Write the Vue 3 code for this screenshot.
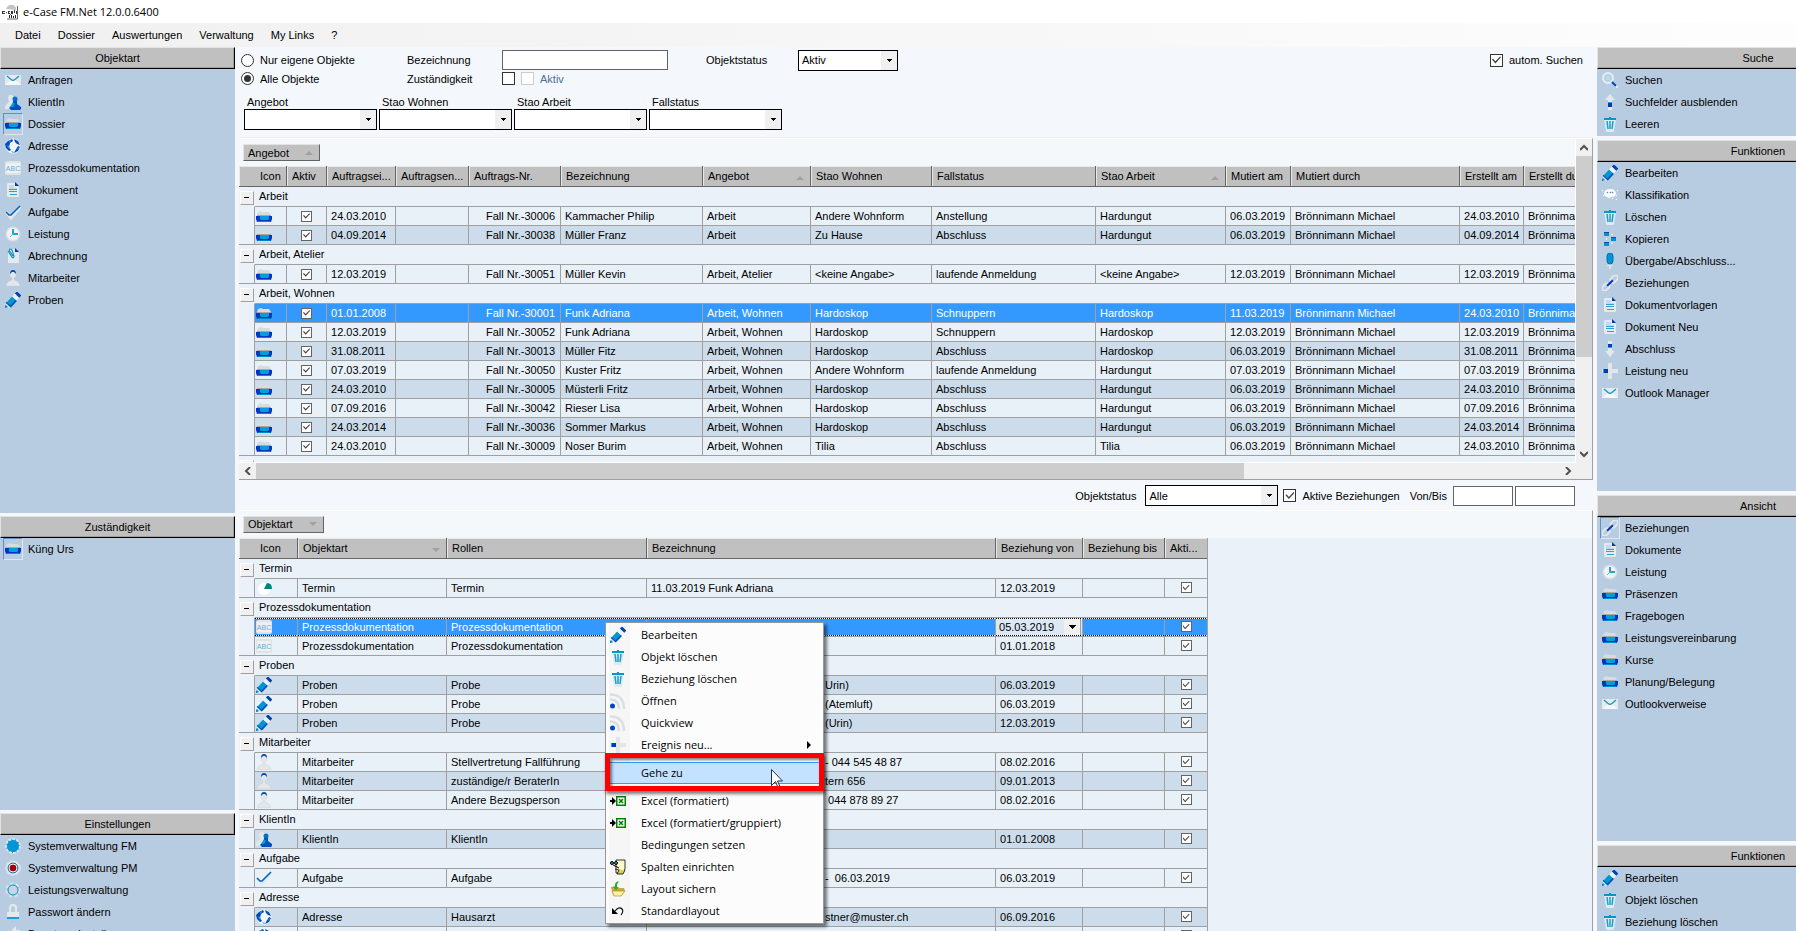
<script setup>
import { ref } from 'vue'

const menus = ['Datei', 'Dossier', 'Auswertungen', 'Verwaltung', 'My Links', '?']

const leftPanels = [
  {
    title: 'Objektart',
    size: 466,
    items: [
      ['mail', 'Anfragen'],
      ['client', 'KlientIn'],
      ['box', 'Dossier', true],
      ['globe', 'Adresse'],
      ['abc', 'Prozessdokumentation'],
      ['doc', 'Dokument'],
      ['check', 'Aufgabe'],
      ['clock', 'Leistung'],
      ['clip', 'Abrechnung'],
      ['person', 'Mitarbeiter'],
      ['pencil', 'Proben'],
    ],
  },
  { title: 'Zuständigkeit', size: 294, items: [['box', 'Küng Urs', true]] },
  {
    title: 'Einstellungen',
    size: 118,
    items: [
      ['gear-blue', 'Systemverwaltung FM'],
      ['gear-red', 'Systemverwaltung PM'],
      ['gear', 'Leistungsverwaltung'],
      ['lock', 'Passwort ändern'],
      ['tool', 'Benutzereinstellungen'],
    ],
  },
]

const rightPanels = [
  {
    title: 'Suche',
    size: 89,
    items: [['search', 'Suchen'], ['up', 'Suchfelder ausblenden'], ['trash', 'Leeren']],
  },
  {
    title: 'Funktionen',
    size: 351,
    items: [
      ['pencil', 'Bearbeiten'],
      ['cloud', 'Klassifikation'],
      ['trash', 'Löschen'],
      ['copy', 'Kopieren'],
      ['pin', 'Übergabe/Abschluss...'],
      ['link', 'Beziehungen'],
      ['doc', 'Dokumentvorlagen'],
      ['doc', 'Dokument Neu'],
      ['down', 'Abschluss'],
      ['plus', 'Leistung neu'],
      ['mail', 'Outlook Manager'],
    ],
  },
  {
    title: 'Ansicht',
    size: 346,
    items: [
      ['link', 'Beziehungen', true],
      ['doc', 'Dokumente'],
      ['clock', 'Leistung'],
      ['box', 'Präsenzen'],
      ['box', 'Fragebogen'],
      ['box', 'Leistungsvereinbarung'],
      ['box', 'Kurse'],
      ['box', 'Planung/Belegung'],
      ['mail', 'Outlookverweise'],
    ],
  },
  {
    title: 'Funktionen',
    size: 86,
    items: [['pencil', 'Bearbeiten'], ['trash', 'Objekt löschen'], ['trash', 'Beziehung löschen']],
  },
]

const filters = ['Angebot', 'Stao Wohnen', 'Stao Arbeit', 'Fallstatus']

const caseCols = [
  ['Auftragsei...', 69],
  ['Auftragsen...', 73],
  ['Auftrags-Nr.', 92],
  ['Bezeichnung', 142],
  ['Angebot', 108, true],
  ['Stao Wohnen', 121],
  ['Fallstatus', 164],
  ['Stao Arbeit', 130, true],
  ['Mutiert am', 65],
  ['Mutiert durch', 169],
  ['Erstellt am', 64],
  ['Erstellt durch', 169],
]
const BM = 'Brönnimann Michael'
const caseRow = (n, von, nr, name, angebot, wohnen, status, arbeit, mutiert, erstellt) => ({
  n,
  cells: [von, '', 'Fall Nr.-' + nr, name, angebot, wohnen, status, arbeit, mutiert, BM, erstellt, BM],
})
const AW = 'Arbeit, Wohnen'
const caseGroups = [
  {
    title: 'Arbeit',
    rows: [
      caseRow(0, '24.03.2010', 30006, 'Kammacher Philip', 'Arbeit', 'Andere Wohnform', 'Anstellung', 'Hardungut', '06.03.2019', '24.03.2010'),
      caseRow(1, '04.09.2014', 30038, 'Müller Franz', 'Arbeit', 'Zu Hause', 'Abschluss', 'Hardungut', '06.03.2019', '04.09.2014'),
    ],
  },
  {
    title: 'Arbeit, Atelier',
    rows: [
      caseRow(2, '12.03.2019', 30051, 'Müller Kevin', 'Arbeit, Atelier', '<keine Angabe>', 'laufende Anmeldung', '<keine Angabe>', '12.03.2019', '12.03.2019'),
    ],
  },
  {
    title: AW,
    rows: [
      caseRow(3, '01.01.2008', 30001, 'Funk Adriana', AW, 'Hardoskop', 'Schnuppern', 'Hardoskop', '11.03.2019', '24.03.2010'),
      caseRow(4, '12.03.2019', 30052, 'Funk Adriana', AW, 'Hardoskop', 'Schnuppern', 'Hardoskop', '12.03.2019', '12.03.2019'),
      caseRow(5, '31.08.2011', 30013, 'Müller Fitz', AW, 'Hardoskop', 'Abschluss', 'Hardoskop', '06.03.2019', '31.08.2011'),
      caseRow(6, '07.03.2019', 30050, 'Kuster Fritz', AW, 'Andere Wohnform', 'laufende Anmeldung', 'Hardungut', '07.03.2019', '07.03.2019'),
      caseRow(7, '24.03.2010', 30005, 'Müsterli Fritz', AW, 'Hardoskop', 'Abschluss', 'Hardungut', '06.03.2019', '24.03.2010'),
      caseRow(8, '07.09.2016', 30042, 'Rieser Lisa', AW, 'Hardoskop', 'Abschluss', 'Hardungut', '06.03.2019', '07.09.2016'),
      caseRow(9, '24.03.2014', 30036, 'Sommer Markus', AW, 'Hardoskop', 'Abschluss', 'Hardungut', '06.03.2019', '24.03.2014'),
      caseRow(10, '24.03.2010', 30009, 'Noser Burim', AW, 'Tilia', 'Abschluss', 'Tilia', '06.03.2019', '24.03.2010'),
    ],
  },
]

const relGroups = [
  { title: 'Termin', rows: [{ n: 0, icon: 'pie', type: 'Termin', role: 'Termin', text: '11.03.2019 Funk Adriana', from: '12.03.2019' }] },
  {
    title: 'Prozessdokumentation',
    rows: [
      { n: 1, icon: 'abc', type: 'Prozessdokumentation', role: 'Prozessdokumentation', text: '', from: '05.03.2019' },
      { n: 2, icon: 'abc', type: 'Prozessdokumentation', role: 'Prozessdokumentation', text: '', from: '01.01.2018' },
    ],
  },
  {
    title: 'Proben',
    rows: [
      { n: 3, icon: 'pencil', type: 'Proben', role: 'Probe', tail: 'Urin)', from: '06.03.2019' },
      { n: 4, icon: 'pencil', type: 'Proben', role: 'Probe', tail: '(Atemluft)', from: '06.03.2019' },
      { n: 5, icon: 'pencil', type: 'Proben', role: 'Probe', tail: '(Urin)', from: '12.03.2019' },
    ],
  },
  {
    title: 'Mitarbeiter',
    rows: [
      { n: 6, icon: 'person', type: 'Mitarbeiter', role: 'Stellvertretung Fallführung', tail: '- 044 545 48 87', from: '08.02.2016' },
      { n: 7, icon: 'person', type: 'Mitarbeiter', role: 'zuständige/r BeraterIn', tail: 'tern 656', from: '09.01.2013' },
      { n: 8, icon: 'person', type: 'Mitarbeiter', role: 'Andere Bezugsperson', tail: ' 044 878 89 27', from: '08.02.2016' },
    ],
  },
  { title: 'KlientIn', rows: [{ n: 9, icon: 'client', type: 'KlientIn', role: 'KlientIn', text: '', from: '01.01.2008' }] },
  { title: 'Aufgabe', rows: [{ n: 10, icon: 'check', type: 'Aufgabe', role: 'Aufgabe', tail: '-  06.03.2019', from: '06.03.2019' }] },
  {
    title: 'Adresse',
    rows: [
      { n: 11, icon: 'globe', type: 'Adresse', role: 'Hausarzt', tail: 'stner@muster.ch', from: '06.09.2016' },
      { n: 12, icon: 'globe', type: 'Adresse', role: 'Ihre Adresse', text: 'Informed Bez. 044 545 87 88', from: '06.02.2018' },
    ],
  },
]

const contextTop = [
  ['pencil', 'Bearbeiten'],
  ['trash', 'Objekt löschen'],
  ['trash', 'Beziehung löschen'],
  ['rss', 'Öffnen'],
  ['rss', 'Quickview'],
  ['plus', 'Ereignis neu...', true],
]
const contextBottom = [
  ['excel', 'Excel (formatiert)'],
  ['excel', 'Excel (formatiert/gruppiert)'],
  ['', 'Bedingungen setzen'],
  ['columns', 'Spalten einrichten'],
  ['folder', 'Layout sichern'],
  ['undo', 'Standardlayout'],
]

const scope = ref('alle')
const auto = ref(true)
const activeOnly = ref(true)
</script>

<template>
  <div class="app">
    <svg class="defs" aria-hidden="true">
      <symbol id="mail" viewBox="0 0 16 16"><path d="M0 3h16v10H0z" fill="#e4e9ee" /><path d="M0 13l6-5h4l6 5z" fill="#f4f6f8" /><path d="M2 4l4 3.500q2 1.500 4 0L14 4" fill="none" stroke="#1098c8" stroke-width="1.300" /></symbol>
      <symbol id="client" viewBox="0 0 16 16"><path d="M4 1h3q2 1 1 4v4l2 6H0v-3l4-4-1-4z" fill="#e2e6ea" /><circle cx="10" cy="5" r="2.500" fill="#0070c8" /><path d="M8 7h4v3l4 3v2l-1 1H6l-2-2 4-4z" fill="#0050c0" /><path d="M8 8l2 2-2 3H5z" fill="#00a0d8" /></symbol>
      <symbol id="box" viewBox="0 0 16 16"><path d="M2 3l3-1 2 1h6l2 3v1H1V6z" fill="#d9dcde" /><path d="M1 6h14v1H1z" fill="#a8a8a8" /><path d="M0 7h16v3l-1 3H1l-1-3z" fill="#0034c4" /><path d="M4 7h9v3l-1 1H5l-1-1z" fill="#00a0d4" /><path d="M1 12h14l-1 1H2z" fill="#0088cc" /></symbol>
      <symbol id="globe" viewBox="0 0 16 16"><circle cx="8" cy="8" r="7.500" fill="#f2f6fa" /><path d="M3 3l4-2 1 2-3 2-1 4 2 3-2 1-3-3-1-4zM9 1l4 2 2 4-3-1-2-2zM13 8l2 1-2 4-4 2 1-2z" fill="#0048b8" /><path d="M4 3l2-1v1L4 5zM2 7l2 1 1 3-2-1zM13 9l1 1-2 2zM11 2l2 2-2-1zM6 13l3 1-1 1z" fill="#18a0d8" /></symbol>
      <symbol id="abc" viewBox="0 0 16 16"><rect y="1" width="16" height="14" rx="2" fill="#dfe3e6" /><rect x="1" y="3" width="14" height="10" fill="#eef0f1" /><text x="8" y="11" text-anchor="middle" font-family="Liberation Sans, sans-serif" font-size="7" fill="#58b0dc">ABC</text></symbol>
      <symbol id="doc" viewBox="0 0 16 16"><path d="M3 1h7l4 4v9l-1 1H3l-1-1V2z" fill="#e6eaee" /><path d="M4 3h5v3h3v1H4z" fill="#b9ddf4" /><path d="M10 0l4 4h-4z" fill="#0038a8" /><path d="M4 7.500h8M4 9.500h8M5 12.500h7" stroke="#30a0d0" /></symbol>
      <symbol id="check" viewBox="0 0 16 16"><path d="M1 8l5 6 9-11" fill="none" stroke="#e6e9ec" stroke-width="3" /><path d="M1 8l3 3h2L15 2" fill="none" stroke="#0064c0" stroke-width="1.600" /></symbol>
      <symbol id="clock" viewBox="0 0 16 16"><circle cx="8" cy="8" r="7.500" fill="#d9dee2" /><circle cx="8" cy="8" r="6" fill="#f1f3f4" /><path d="M8 3v5h5" fill="none" stroke="#20a8c8" stroke-width="2" /><path d="M8 8l-3 3" stroke="#60b8d8" /></symbol>
      <symbol id="clip" viewBox="0 0 16 16"><path d="M3 1h7l4 4v10H3z" fill="#e6eaee" /><path d="M10 0l4 4h-4z" fill="#0038a8" /><path d="M3 3l4 6q2 2 2-1L7 2Q5 0 4 2l4 6" fill="none" stroke="#1890c8" stroke-width="1.200" /></symbol>
      <symbol id="person" viewBox="0 0 16 16"><path d="M5 3q0-2 3-2t3 2v3L9 8v2l4 2 2 3-1 1H2l-1-1 2-3 4-2V8L5 6z" fill="#e4e6e9" stroke="#cdd2d7" stroke-width=".5" /><path d="M5 4q0-4 3-4t3 4L9 2H7z" fill="#0048b0" /></symbol>
      <symbol id="pencil" viewBox="0 0 16 16"><g transform="rotate(-47 8 8)"><path d="M-3 8l4-3v6z" fill="#e7edf3" /><path d="M1 5h9v6H1z" fill="#0096d4" /><path d="M1 10h9v1.500H1zM1 4.500h1v6H1z" fill="#0048b8" /><path d="M10 5h4v6h-4z" fill="#eef2f6" /><path d="M14 5h3v6h-3z" fill="#0040b0" /></g><path d="M0 14l1-1 2 2-2 1H0z" fill="#0090cc" /></symbol>
      <symbol id="gear-blue" viewBox="0 0 16 16"><circle cx="8" cy="8" r="7" fill="#0096d4" stroke="#dce4ea" stroke-width="2" stroke-dasharray="3 1" /></symbol>
      <symbol id="gear-red" viewBox="0 0 16 16"><circle cx="8" cy="8" r="7" fill="#eef2f5" stroke="#d8dfe5" stroke-width="2" stroke-dasharray="3 2" /><circle cx="8" cy="8" r="5" fill="#a00010" stroke="#0080c0" /><circle cx="8" cy="8" r="4" fill="none" stroke="#fff" /></symbol>
      <symbol id="gear" viewBox="0 0 16 16"><circle cx="8" cy="8" r="6" fill="none" stroke="#dce2e7" stroke-width="3" stroke-dasharray="3 2" /><circle cx="8" cy="8" r="5" fill="#c6d8e8" stroke="#0090d0" /></symbol>
      <symbol id="lock" viewBox="0 0 16 16"><path d="M5 8V4q0-3 3-3t3 3v4" fill="none" stroke="#e6e9ec" stroke-width="2" /><path d="M2 8h12v7H2z" fill="#e6e9ec" /><path d="M2 13h12v2H2z" fill="#2898d0" /></symbol>
      <symbol id="tool" viewBox="0 0 16 16"><path d="M3 15l5-7-1-4 4-4v4h4l-3 4-3 1-5 6z" fill="#e6e9ec" /></symbol>
      <symbol id="search" viewBox="0 0 16 16"><circle cx="6" cy="6" r="5" fill="#c4d8e8" stroke="#e6ebef" stroke-width="2" /><circle cx="6" cy="6" r="3" fill="none" stroke="#9ed0e8" /><path d="M10 10l4 4" stroke="#0048b8" stroke-width="2" /><path d="M14 14l2 2" stroke="#e6ebef" stroke-width="2" /></symbol>
      <symbol id="up" viewBox="0 0 16 16"><path d="M8 0l5 6h-3v10H6V6H3z" fill="#e4e8ec" /><path d="M6 9h4v4H6z" fill="#0038c0" /><path d="M6 8h4v1H6z" fill="#20a0d8" /></symbol>
      <symbol id="down" viewBox="0 0 16 16"><path d="M8 16l5-6h-3V0H6v10H3z" fill="#e4e8ec" /><path d="M6 3h4v3H6z" fill="#0038c0" /><path d="M6 6h4v1H6z" fill="#20a0d8" /></symbol>
      <symbol id="trash" viewBox="0 0 16 16"><path d="M2 3h12l-2 12-1 1H5l-1-1z" fill="#dfe9ef" /><path d="M2 2h12v2H2zM7 1h2v1H7z" fill="#0096cc" /><path d="M5 5l1 8M8 5v8M11 5l-1 8" stroke="#18a0cc" stroke-width="1.500" /></symbol>
      <symbol id="cloud" viewBox="0 0 16 16"><path d="M2 6q1-4 6-4t6 4q0 4-4 4l-3 1-2-1Q2 9 2 6z" fill="#fff" /><path d="M5 5h1v1H5zM8 5h1v1H8zM10 5h1v1h-1z" fill="#0070c0" stroke="#60a0c8" stroke-width=".5" /><path d="M0 3h1v1H0zM15 3h1v1h-1zM1 8h1v1H1zM14 8h1v1h-1zM10 11h1v1h-1zM14 12h1v1h-1z" fill="#fff" /></symbol>
      <symbol id="copy" viewBox="0 0 16 16"><path d="M2 1h5v4H2zM9 6h5v4H9zM2 11h5v4H2z" fill="#0090d0" /><path d="M2 1h5v1H2zM9 6h5v1H9zM2 11h5v1H2z" fill="#0050b8" /><path d="M9 3h2v1H9zM4 7h1v2H4zM9 12h2v1H9z" fill="#e8eef4" /></symbol>
      <symbol id="pin" viewBox="0 0 16 16"><path d="M7 9h2v7H7zM5 12h6v1H5z" fill="#dfe3e8" /><rect x="5" width="6" height="11" rx="3" fill="#0096d4" stroke="#0070b8" /></symbol>
      <symbol id="link" viewBox="0 0 16 16"><g transform="rotate(-45 8 8)"><rect x="-2" y="5.500" width="8" height="5" rx="2" fill="none" stroke="#e4e7ea" stroke-width="2" /><rect x="10" y="5.500" width="8" height="5" rx="2" fill="none" stroke="#e4e7ea" stroke-width="2" /><path d="M4 8h8" stroke="#0038c0" stroke-width="2" /></g></symbol>
      <symbol id="plus" viewBox="0 0 16 16"><path d="M6 0h4v6h6v4h-6v6H6v-6H0V6h6z" fill="#e3e6e9" /><path d="M2 6h4v4H2z" fill="#0038c0" /><path d="M1 6h1v4H1z" fill="#20a0d8" /></symbol>
      <symbol id="rss" viewBox="0 0 16 16"><path d="M0 1.500Q14 1.500 14 16M0 6.500Q9 6.500 9 16" fill="none" stroke="#dcdfe2" stroke-width="2.500" /><circle cx="2.500" cy="13" r="2.500" fill="#0048c0" /></symbol>
      <symbol id="pie" viewBox="0 0 16 16"><circle cx="8" cy="9" r="6" fill="#fff" /><path d="M8 9l3-6q5 0 5 6z" fill="#008080" /></symbol>
      <symbol id="excel" viewBox="0 0 16 16"><path d="M0 7h2V4l4 4-4 4V9H0z" fill="#000" /><path d="M6 3h10v10H6z" fill="#008000" /><path d="M7.500 4.500h7v7h-7z" fill="#fff" /><path d="M9 6l4 4M13 6l-4 4" stroke="#008000" stroke-width="1.500" /></symbol>
      <symbol id="columns" viewBox="0 0 16 16"><path d="M6 1h9v9l-3 4H6z" fill="#fffccc" stroke="#000" stroke-width=".8" /><path d="M5 10l4 1-2 4h6l2-4" fill="#d8d060" stroke="#000" stroke-width=".8" /><circle cx="2" cy="4" r="1.500" fill="#00b0b0" stroke="#000" /><circle cx="6" cy="4" r="1.500" fill="#00b0b0" stroke="#000" /><path d="M3 6l6 3" stroke="#000" /></symbol>
      <symbol id="folder" viewBox="0 0 16 16"><path d="M1 6l4-1 2 2h7l1 3-4 5-8-1z" fill="#c8a840" /><path d="M2 10h13l-4 5H4z" fill="#fff0a0" stroke="#a89030" stroke-width=".7" /><path d="M9 0q-5 1-4 6H3l3 3 3-3H7q0-4 2-6z" fill="#30a830" /></symbol>
      <symbol id="undo" viewBox="0 0 16 16"><path d="M5 8q4-5 7-2 2 2-1 6" fill="none" stroke="#000" stroke-width="1.100" /><path d="M2 5v6h6z" fill="#000" /></symbol>
    </svg>

    <header class="title">
      <svg class="logo" viewBox="0 0 16 16" aria-hidden="true">
        <path d="M4 5Q6 0 11 1q4 2 3 5z" fill="#c4c4c4" />
        <path d="M15.500 2v13H5" fill="none" stroke="#666" />
        <path d="M0 7h3v1H1v1h2v1H0zM4 8h1v1H4zM6 7h2v1H7v1h1v1H6zM9 7h2v3H9zM12 6h1v3h-1zM14 7h1v3h-1z" fill="#333" />
        <path d="M7 11h1v3H7zM9 11h1v3H9zM11 12h1v2h-1zM13 11h1v3h-1z" fill="#222" />
        <path d="M8 10h1v1H8z" fill="#d03030" />
      </svg>
      <span>e-Case FM.Net 12.0.0.6400</span>
    </header>
    <nav class="menu">
      <button v-for="m in menus" :key="m" type="button">{{ m }}</button>
    </nav>

    <div class="body">
      <aside class="side left">
        <section v-for="p in leftPanels" :key="p.title" class="panel" :style="{ flexGrow: p.size }">
          <h2>{{ p.title }}</h2>
          <button v-for="i in p.items" :key="i[1]" type="button" class="item" :class="{ on: i[2] }">
            <span class="pic"><svg><use :href="'#' + i[0]" /></svg></span>{{ i[1] }}
          </button>
        </section>
      </aside>

      <main class="center">
        <form class="search" @submit.prevent>
          <div class="fields">
            <label class="opt"><input v-model="scope" type="radio" name="scope" value="eigene" />Nur eigene Objekte</label>
            <label for="bez">Bezeichnung</label>
            <input id="bez" class="text" type="text" />
            <label for="status">Objektstatus</label>
            <span class="combo"><select id="status"><option>Aktiv</option></select></span>
            <label class="opt auto"><input v-model="auto" type="checkbox" />autom. Suchen</label>
            <label class="opt"><input v-model="scope" type="radio" name="scope" value="alle" />Alle Objekte</label>
            <label for="zust">Zuständigkeit</label>
            <span class="pair">
              <input id="zust" type="checkbox" />
              <label class="opt off"><input type="checkbox" disabled />Aktiv</label>
            </span>
          </div>
          <div class="filters">
            <label v-for="f in filters" :key="f">
              <span>{{ f }}</span>
              <span class="combo"><select><option></option></select></span>
            </label>
          </div>
        </form>

        <section class="grid cases">
          <div class="view">
            <div class="groupbar"><button type="button">Angebot<i class="tri"></i></button></div>
            <table>
              <colgroup>
                <col class="c-gutter" /><col class="c-icon" /><col class="c-check" />
                <col v-for="c in caseCols" :key="c[0]" :style="{ width: c[1] + 'px' }" />
              </colgroup>
              <thead>
                <tr>
                  <th colspan="2" class="first">Icon</th>
                  <th>Aktiv</th>
                  <th v-for="c in caseCols" :key="c[0]">{{ c[0] }}<i v-if="c[2]" class="tri"></i></th>
                </tr>
              </thead>
              <tbody v-for="g in caseGroups" :key="g.title">
                <tr class="group">
                  <td class="gutter"><button type="button" class="fold" :aria-label="g.title"></button></td>
                  <td colspan="14">{{ g.title }}</td>
                </tr>
                <tr v-for="r in g.rows" :key="r.n" :class="{ dark: r.n % 2, sel: r.n === 3 }">
                  <td class="gutter"></td>
                  <td class="ico"><svg><use href="#box" /></svg></td>
                  <td class="mid"><input type="checkbox" checked :aria-label="'Aktiv ' + r.cells[3]" /></td>
                  <td v-for="(c, k) in r.cells" :key="k" :class="{ num: k === 2 }">{{ c }}</td>
                </tr>
              </tbody>
              <tbody>
                <tr class="group">
                  <td class="gutter"><button type="button" class="fold" aria-label="Gruppe"></button></td>
                  <td colspan="14"></td>
                </tr>
              </tbody>
            </table>
          </div>
          <div class="vbar">
            <button type="button" aria-label="Nach oben"><svg viewBox="0 0 8 8"><path d="M0 6l4-4 4 4" /></svg></button>
            <div class="thumb"></div>
            <div class="rest"></div>
            <button type="button" aria-label="Nach unten"><svg viewBox="0 0 8 8"><path d="M0 2l4 4 4-4" /></svg></button>
          </div>
          <div class="hbar">
            <button type="button" aria-label="Nach links"><svg viewBox="0 0 8 8"><path d="M6 0L2 4l4 4" /></svg></button>
            <div class="thumb"></div>
            <div class="rest"></div>
            <button type="button" aria-label="Nach rechts"><svg viewBox="0 0 8 8"><path d="M2 0l4 4-4 4" /></svg></button>
          </div>
          <div class="corner"></div>
        </section>

        <div class="relbar">
          <label for="rstatus">Objektstatus</label>
          <span class="combo"><select id="rstatus"><option>Alle</option></select></span>
          <label class="opt"><input v-model="activeOnly" type="checkbox" />Aktive Beziehungen</label>
          <label for="von" class="range">Von/Bis</label>
          <input id="von" class="text" type="text" />
          <input class="text" type="text" aria-label="Bis" />
        </div>

        <section class="grid rel">
          <div class="groupbar"><button type="button">Objektart<i class="tri down"></i></button></div>
          <table>
            <colgroup>
              <col class="c-gutter" /><col class="r-icon" /><col class="r-type" /><col class="r-role" />
              <col class="r-text" /><col class="r-from" /><col class="r-to" /><col class="r-act" />
            </colgroup>
            <thead>
              <tr>
                <th colspan="2" class="first">Icon</th>
                <th>Objektart<i class="tri down"></i></th>
                <th>Rollen</th>
                <th>Bezeichnung</th>
                <th>Beziehung von</th>
                <th>Beziehung bis</th>
                <th>Akti...</th>
              </tr>
            </thead>
            <tbody v-for="g in relGroups" :key="g.title">
              <tr class="group">
                <td class="gutter"><button type="button" class="fold" :aria-label="g.title"></button></td>
                <td colspan="7">{{ g.title }}</td>
              </tr>
              <tr v-for="r in g.rows" :key="r.n" :class="{ dark: r.n % 2, sel: r.n === 1, focus: r.n === 1 }">
                <td class="gutter"></td>
                <td class="ico"><svg><use :href="'#' + r.icon" /></svg></td>
                <td>{{ r.type }}</td>
                <td>{{ r.role }}</td>
                <td :class="{ tail: r.tail }">{{ r.tail || r.text }}</td>
                <td v-if="r.n === 1" class="edit">
                  <div><input type="text" :value="r.from" aria-label="Beziehung von" /><button type="button" aria-label="Kalender öffnen"></button></div>
                </td>
                <td v-else>{{ r.from }}</td>
                <td></td>
                <td class="mid"><input type="checkbox" checked :aria-label="'Aktiv ' + r.type" /></td>
              </tr>
            </tbody>
          </table>
        </section>
      </main>

      <aside class="side right">
        <section v-for="(p, k) in rightPanels" :key="k" class="panel" :style="{ flexGrow: p.size }">
          <h2>{{ p.title }}</h2>
          <button v-for="i in p.items" :key="i[1]" type="button" class="item" :class="{ on: i[2] }">
            <span class="pic"><svg><use :href="'#' + i[0]" /></svg></span>{{ i[1] }}
          </button>
        </section>
      </aside>
    </div>

    <div class="context" role="menu">
      <button v-for="i in contextTop" :key="i[1]" type="button" role="menuitem">
        <svg class="ci"><use :href="'#' + i[0]" /></svg>{{ i[1] }}<i v-if="i[2]" class="sub"></i>
      </button>
      <div class="goto">
        <button type="button" role="menuitem"><svg class="ci"></svg>Gehe zu</button>
        <svg class="cursor" viewBox="0 0 12 19" aria-hidden="true"><path d="M.5.500v16l4-4 2.500 6 2-1-2.500-5.500h5z" fill="#fff" stroke="#203050" /></svg>
        <div class="mark"></div>
      </div>
      <button v-for="i in contextBottom" :key="i[1]" type="button" role="menuitem">
        <svg class="ci"><use v-if="i[0]" :href="'#' + i[0]" /></svg>{{ i[1] }}
      </button>
    </div>
  </div>
</template>

<style>
body {
  margin: 0;
  overflow: hidden;
}
</style>

<style scoped>
.app {
  position: relative;
  display: flex;
  flex-direction: column;
  height: 100vh;
  overflow: hidden;
  background: #f4f8fc;
  color: #000;
  font: 11px/16px "Liberation Sans", Arial, sans-serif;
}
.app *,
.app *::after {
  box-sizing: border-box;
}
.defs {
  position: absolute;
  width: 0;
  height: 0;
}
button,
input,
select {
  margin: 0;
  padding: 0;
  border: 0;
  border-radius: 0;
  background: none;
  color: inherit;
  font: inherit;
}
.title {
  display: flex;
  flex: none;
  align-items: center;
  gap: 5px;
  height: 23px;
  padding-left: 2px;
  background: #fff;
  font: 11px/16px "Open Sans", "Noto Sans", sans-serif;
}
.logo {
  width: 16px;
  height: 16px;
}
.menu {
  display: flex;
  flex: none;
  gap: 17px;
  height: 24px;
  padding-left: 15px;
  background: linear-gradient(90deg, #f0f0f0, #fdfdfd);
}
.body {
  display: grid;
  grid-template-columns: 235px minmax(0, 1fr) 199px;
  gap: 4px;
  flex: 1;
  min-height: 0;
}

/* side panels */
.side {
  display: flex;
  flex-direction: column;
  gap: 3px;
  min-height: 0;
  overflow: hidden;
}
.side.right {
  gap: 4px;
}
.panel {
  display: flex;
  flex-direction: column;
  flex: 1 1 0;
  min-height: 0;
  overflow: hidden;
  background: #b8cce1;
}
.panel h2 {
  flex: none;
  height: 22px;
  margin: 0;
  border: 1px solid #000;
  border-top-color: #e3e3e3;
  border-left-color: #e3e3e3;
  background: #c0c0c0;
  box-shadow: inset -1px -1px #a0a0a0;
  font-size: 11px;
  font-weight: normal;
  line-height: 20px;
  text-align: center;
}
.right .panel h2 {
  width: 322px;
}
.item {
  display: flex;
  flex: none;
  align-items: center;
  gap: 5px;
  height: 22px;
  padding-left: 3px;
  text-align: left;
  white-space: nowrap;
}
.pic {
  display: flex;
  align-items: center;
  justify-content: center;
  width: 20px;
  height: 22px;
  border: 1px solid transparent;
}
.pic svg,
.ico svg,
.ci {
  display: block;
  flex: none;
  width: 16px;
  height: 16px;
}
.on .pic {
  border-color: #5f8fc4 #dce8f4 #dce8f4 #5f8fc4;
}

/* centre */
.center {
  display: flex;
  flex-direction: column;
  min-width: 0;
  min-height: 0;
}
.search {
  flex: none;
  height: 91px;
  padding: 2px 10px 0 2px;
  border-bottom: 1px solid #eee;
}
.fields {
  display: grid;
  grid-template-columns: 166px 95px 204px 92px 100px 1fr;
  grid-template-rows: 22px 15px;
  align-items: center;
}
.text {
  height: 20px;
  padding: 0 3px;
  border: 1px solid #646464;
  background: #fff;
}
#bez {
  width: 166px;
}
.opt {
  display: flex;
  align-items: center;
  gap: 6px;
}
.auto {
  justify-self: end;
}
.pair {
  display: flex;
  align-items: center;
  gap: 6px;
}
.off {
  color: #4a7090;
}
input[type="checkbox"],
input[type="radio"] {
  position: relative;
  flex: none;
  width: 13px;
  height: 13px;
  border: 1px solid #333;
  background: #fff;
  appearance: none;
}
input[type="radio"] {
  border-radius: 50%;
}
input[type="checkbox"]:disabled {
  border-color: #ccc;
}
input[type="checkbox"]:checked::after {
  content: "";
  position: absolute;
  inset: 1px;
  background: #444;
  clip-path: polygon(0 45%, 12% 35%, 38% 65%, 90% 10%, 100% 20%, 38% 88%);
}
input[type="radio"]:checked::after {
  content: "";
  position: absolute;
  inset: 2px;
  border-radius: 50%;
  background: #333;
}
.combo {
  position: relative;
  display: block;
  height: 21px;
  border: 1px solid #000;
  background: #fff;
}
.combo select {
  display: block;
  width: 100%;
  height: 19px;
  padding-left: 3px;
  appearance: none;
}
.combo::after {
  content: "";
  position: absolute;
  top: 0;
  right: 0;
  width: 16px;
  height: 19px;
  background: linear-gradient(#000, #000) 6px 8px / 5px 1px no-repeat,
    linear-gradient(#000, #000) 7px 9px / 3px 1px no-repeat,
    linear-gradient(#000, #000) 8px 10px / 1px 1px no-repeat, #f0f0f0;
  pointer-events: none;
}
.filters {
  display: flex;
  gap: 2px;
  margin-top: 10px;
  padding-left: 3px;
}
.filters label {
  width: 133px;
  line-height: 13px;
}
.filters label > span:first-child {
  display: block;
  padding-left: 3px;
}

/* grids */
.grid {
  min-height: 0;
  overflow: hidden;
  border-top: 1px solid #fff;
  border-right: 1px solid #a0a0a0;
  background: #eaf1f9;
}
.cases {
  display: grid;
  grid-template-columns: minmax(0, 1fr) 16px;
  grid-template-rows: minmax(0, 1fr) 16px;
  flex: 341 1 0;
  border-bottom: 1px solid #a0a0a0;
}
.rel {
  flex: 422 1 0;
}
.view {
  min-width: 0;
  overflow: hidden;
  border-right: 1px solid #fff;
  border-bottom: 1px solid #fff;
}
.groupbar {
  height: 27px;
  padding: 5px 4px;
  background: #f4f8fb;
}
.groupbar button {
  display: flex;
  align-items: center;
  justify-content: space-between;
  width: 77px;
  height: 17px;
  padding: 0 6px 0 4px;
  border: 1px solid #646464;
  border-top-color: #e3e3e3;
  border-left-color: #e3e3e3;
  background: #c0c0c0;
}
.rel .groupbar button {
  width: 81px;
}
.tri {
  width: 0;
  height: 0;
  border: 4px solid transparent;
  border-top-width: 0;
  border-bottom-color: #a0a0a0;
}
.tri.down {
  border-top: 4px solid #a0a0a0;
  border-bottom: 0;
}
th .tri {
  float: right;
  margin: 9px 6px 0 0;
}
table {
  width: 0;
  border-spacing: 0;
  table-layout: fixed;
  white-space: nowrap;
}
.rel table {
  border-right: 1px solid #a0a0a0;
}
.c-gutter { width: 15px; }
.c-icon { width: 32px; }
.c-check { width: 40px; }
.r-icon { width: 43px; }
.r-type { width: 149px; }
.r-role { width: 200px; }
.r-text { width: 349px; }
.r-from { width: 87px; }
.r-to { width: 82px; }
.r-act { width: 43px; }
th {
  height: 21px;
  padding: 1px 0 0 5px;
  overflow: hidden;
  border-bottom: 1px solid #646464;
  border-left: 1px solid #646464;
  background: #c0c0c0;
  box-shadow: inset 1px 1px #e8e8e8;
  font-weight: normal;
  line-height: 19px;
  text-align: left;
}
th.first {
  padding-left: 21px;
  border-left: 0;
}
td {
  height: 19px;
  padding: 0 0 0 4px;
  overflow: hidden;
  border-bottom: 1px solid #a0a0a0;
  border-left: 1px solid #a0a0a0;
  background-color: #e8f0f8;
  line-height: 18px;
}
.dark td {
  background-color: #ccdcea;
}
.sel td {
  background-color: #3399ff;
  color: #fff;
}
.group td {
  height: 20px;
  border-left-color: transparent;
  background-color: #eaf1f9;
  line-height: 19px;
}
tr td.gutter {
  padding: 0 0 0 1px;
  border-bottom-color: transparent;
  border-left: 0;
  background-color: #eaf1f9;
}
tr:last-child:not(.group) td.gutter {
  border-bottom-color: #a0a0a0;
}
.fold {
  display: block;
  width: 14px;
  height: 14px;
  margin-top: 3px;
  border: 1px solid #a0a0a0;
  border-top-color: #fff;
  border-left-color: #fff;
  background: linear-gradient(#000, #000) 3px 5px / 5px 1px no-repeat #f0f0f0;
}
td.ico {
  padding-left: 1px;
}
td.ico svg {
  margin-top: 1px;
}
td.mid {
  padding: 0;
  text-align: center;
}
td.mid input {
  display: block;
  width: 11px;
  height: 11px;
  margin: 0 auto;
  border-color: #646464;
}
td.mid input::after {
  inset: 0;
  clip-path: polygon(8% 35%, 22% 35%, 40% 55%, 80% 10%, 92% 10%, 92% 35%, 40% 90%, 8% 60%);
}
td.num {
  padding-right: 5px;
  text-align: right;
}
td.tail {
  padding-left: 178px;
  white-space: pre;
}
.focus td:not(.gutter) {
  background-image: repeating-linear-gradient(90deg, #000 0 1px, #fff 1px 2px),
    repeating-linear-gradient(90deg, #000 0 1px, #fff 1px 2px);
  background-position: 0 0, 0 100%;
  background-repeat: no-repeat;
  background-size: 100% 1px;
}
.sel td.edit {
  padding: 0;
  background-color: #dce8f3;
  color: #000;
}
.edit div {
  display: flex;
  align-items: center;
}
.edit input {
  flex: 1;
  min-width: 0;
  height: 16px;
  padding-left: 3px;
}
.edit button {
  width: 17px;
  height: 16px;
  margin-right: 1px;
  border-right: 1px solid #a0a0a0;
  background: linear-gradient(#000, #000) 5px 6px / 7px 1px no-repeat,
    linear-gradient(#000, #000) 6px 7px / 5px 1px no-repeat,
    linear-gradient(#000, #000) 7px 8px / 3px 1px no-repeat,
    linear-gradient(#000, #000) 8px 9px / 1px 1px no-repeat, #f0f0f0;
}

/* scroll bars */
.vbar,
.hbar,
.corner {
  display: flex;
  background: #f0f0f0;
}
.vbar {
  flex-direction: column;
}
.vbar button,
.hbar button {
  display: flex;
  flex: none;
  align-items: center;
  justify-content: center;
  width: 17px;
  height: 17px;
}
.vbar svg,
.hbar svg {
  width: 8px;
  height: 8px;
  fill: none;
  stroke: #505050;
  stroke-width: 2;
}
.hbar button {
  height: 16px;
}
.vbar button {
  width: 16px;
}
.thumb {
  background: #cdcdcd;
}
.vbar .thumb { flex: 201; }
.vbar .rest { flex: 88; }
.hbar .thumb { flex: 987; }
.hbar .rest { flex: 315; }

.relbar {
  display: flex;
  flex: none;
  align-items: center;
  justify-content: flex-end;
  height: 30px;
  padding: 2px 18px 0 0;
}
.relbar .combo {
  width: 133px;
  margin: 0 5px 0 9px;
}
.relbar .text {
  width: 60px;
  margin-left: 2px;
}
.range {
  margin: 0 4px 0 10px;
}

/* context menu */
.context {
  position: absolute;
  top: 622px;
  left: 605px;
  width: 219px;
  padding: 1px 0;
  border: 1px solid #979797;
  background: linear-gradient(90deg, transparent 3px, #f6f6f6 3px 24px, transparent 24px) #fcfcfc;
  box-shadow: 3px 3px 3px rgba(0, 0, 0, 0.5);
  font: 11px/16px "Open Sans", "Noto Sans", sans-serif;
}
.context button {
  display: flex;
  align-items: center;
  gap: 15px;
  width: 100%;
  height: 22px;
  padding-left: 4px;
  white-space: nowrap;
}
.sub {
  margin: 0 12px 0 auto;
  border: 4px solid transparent;
  border-right-width: 0;
  border-left-color: #000;
}
.goto {
  position: relative;
  margin: 6px 0;
}
.goto button {
  border: 1px solid #3399ff;
  border-width: 1px 0;
  background: #c4e1ff;
}
.cursor {
  position: absolute;
  top: 7px;
  left: 165px;
  width: 12px;
  height: 19px;
}
.mark {
  position: absolute;
  inset: -9px -1px -7px;
  border: 5px solid #f00;
  box-shadow: 1px 3px 3px rgba(0, 0, 0, 0.5), inset 2px 2px 3px rgba(0, 0, 0, 0.5);
}
</style>
